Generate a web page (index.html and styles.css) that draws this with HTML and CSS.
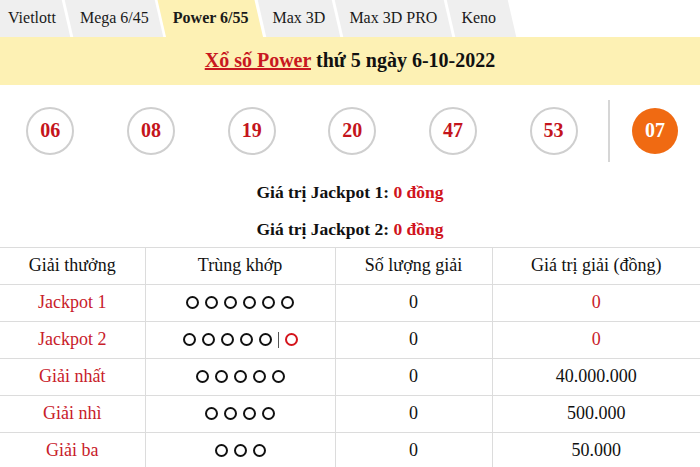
FILE: index.html
```html
<!DOCTYPE html>
<html lang="vi">
<head>
<meta charset="utf-8">
<title>Xổ số Power</title>
<link rel="stylesheet" href="styles.css">
</head>
<body>
<nav class="tabs">
  <a class="tab first">Vietlott</a>
  <a class="tab">Mega 6/45</a>
  <a class="tab active">Power 6/55</a>
  <a class="tab">Max 3D</a>
  <a class="tab">Max 3D PRO</a>
  <a class="tab">Keno</a>
</nav>
<header class="title-band">
  <h1 class="title"><a class="title-link">Xổ số Power</a> thứ 5 ngày 6-10-2022</h1>
</header>
<section class="balls">
  <div class="main-balls">
    <span class="ball">06</span>
    <span class="ball">08</span>
    <span class="ball">19</span>
    <span class="ball">20</span>
    <span class="ball">47</span>
    <span class="ball">53</span>
  </div>
  <div class="power-ball-wrap">
    <span class="ball power">07</span>
  </div>
</section>
<p class="jackpot">Giá trị Jackpot 1: <span class="red">0 đồng</span></p>
<p class="jackpot">Giá trị Jackpot 2: <span class="red">0 đồng</span></p>
<table class="prizes">
  <colgroup>
    <col class="c1"><col class="c2"><col class="c3"><col class="c4">
  </colgroup>
  <thead>
    <tr><th>Giải thưởng</th><th>Trùng khớp</th><th>Số lượng giải</th><th>Giá trị giải (đồng)</th></tr>
  </thead>
  <tbody>
    <tr><td class="name">Jackpot 1</td><td><span class="dot"></span><span class="dot"></span><span class="dot"></span><span class="dot"></span><span class="dot"></span><span class="dot"></span></td><td>0</td><td class="red-val">0</td></tr>
    <tr><td class="name">Jackpot 2</td><td><span class="dot"></span><span class="dot"></span><span class="dot"></span><span class="dot"></span><span class="dot"></span><span class="bar"></span><span class="dot red-dot"></span></td><td>0</td><td class="red-val">0</td></tr>
    <tr><td class="name">Giải nhất</td><td><span class="dot"></span><span class="dot"></span><span class="dot"></span><span class="dot"></span><span class="dot"></span></td><td>0</td><td>40.000.000</td></tr>
    <tr><td class="name">Giải nhì</td><td><span class="dot"></span><span class="dot"></span><span class="dot"></span><span class="dot"></span></td><td>0</td><td>500.000</td></tr>
    <tr><td class="name">Giải ba</td><td><span class="dot"></span><span class="dot"></span><span class="dot"></span></td><td>0</td><td>50.000</td></tr>
  </tbody>
</table>
</body>
</html>
```
FILE: styles.css
```css
* { box-sizing: border-box; }
html, body { margin: 0; padding: 0; background: #fff; }
body {
  font-family: "Liberation Serif", "Times New Roman", serif;
  color: #111;
  width: 700px;
  overflow: hidden;
}
.tabs {
  display: flex;
  gap: 3px;
  height: 37px;
  overflow: hidden;
}
.tab {
  position: relative;
  display: flex;
  align-items: center;
  padding: 0 10.5px 2px;
  font-size: 16px;
  color: #1a1a1a;
  z-index: 0;
}
.tab::before {
  content: "";
  position: absolute;
  inset: 0;
  background: #efefef;
  transform: skewX(13deg);
  z-index: -1;
}
.tab.first { padding-left: 8px; }
.tab.first::before { left: -20px; }
.tab:last-child { padding-right: 16px; }
.tab.active { font-weight: bold; }
.tab.active::before { background: #fdf1b4; bottom: -2px; }
.title-band {
  background: #fdf1b4;
  height: 48px;
  display: flex;
  align-items: center;
  justify-content: center;
}
.title {
  margin: 0 0 2px;
  font-size: 20px;
  font-weight: bold;
  color: #111;
}
.title-link {
  color: #c8181f;
  text-decoration: underline;
}
.balls {
  display: flex;
  align-items: center;
  height: 88px;
  padding-top: 3px;
}
.main-balls {
  flex: 0 0 608px;
  display: flex;
  justify-content: space-around;
  align-items: center;
  padding-right: 4px;
}
.power-ball-wrap {
  flex: 1;
  height: 62px;
  border-left: 2px solid #d6d6d6;
  display: flex;
  align-items: center;
  justify-content: center;
}
.ball {
  width: 48px;
  height: 48px;
  border-radius: 50%;
  border: 2px solid #cfcfcf;
  display: flex;
  align-items: center;
  justify-content: center;
  font-size: 20px;
  font-weight: bold;
  color: #c4141c;
}
.ball.power {
  width: 46px;
  height: 46px;
  border: none;
  background: #f06a12;
  color: #fff;
}
.jackpot {
  margin: 0;
  height: 37px;
  line-height: 37px;
  text-align: center;
  font-size: 17.5px;
  font-weight: bold;
}
.jackpot:first-of-type { margin-top: 1px; }
.red { color: #d0141c; }
.prizes {
  width: 700px;
  border-collapse: collapse;
  font-size: 18px;
  margin-top: -1px;
}
.c1 { width: 145px; }
.c2 { width: 190px; }
.c3 { width: 157px; }
.c4 { width: 208px; }
.prizes th, .prizes td {
  height: 37px;
  padding: 0 0 1px;
  text-align: center;
  vertical-align: middle;
  font-weight: normal;
  border-top: 1.5px solid #dcdcdc;
  border-bottom: 1.5px solid #dcdcdc;
  border-left: 1.5px solid #dcdcdc;
}
.prizes th:first-child, .prizes td:first-child { border-left: none; }
.name { color: #c8202a; }
.red-val { color: #c8202a; }
.dot {
  display: inline-block;
  width: 13px;
  height: 13px;
  border: 2.5px solid #111;
  border-radius: 50%;
  margin: 0 3px;
  vertical-align: -1px;
}
.red-dot { border-color: #d4141c; }
.bar {
  display: inline-block;
  width: 1px;
  height: 16px;
  background: #555;
  margin: 0 3px;
  vertical-align: -3px;
}
```
